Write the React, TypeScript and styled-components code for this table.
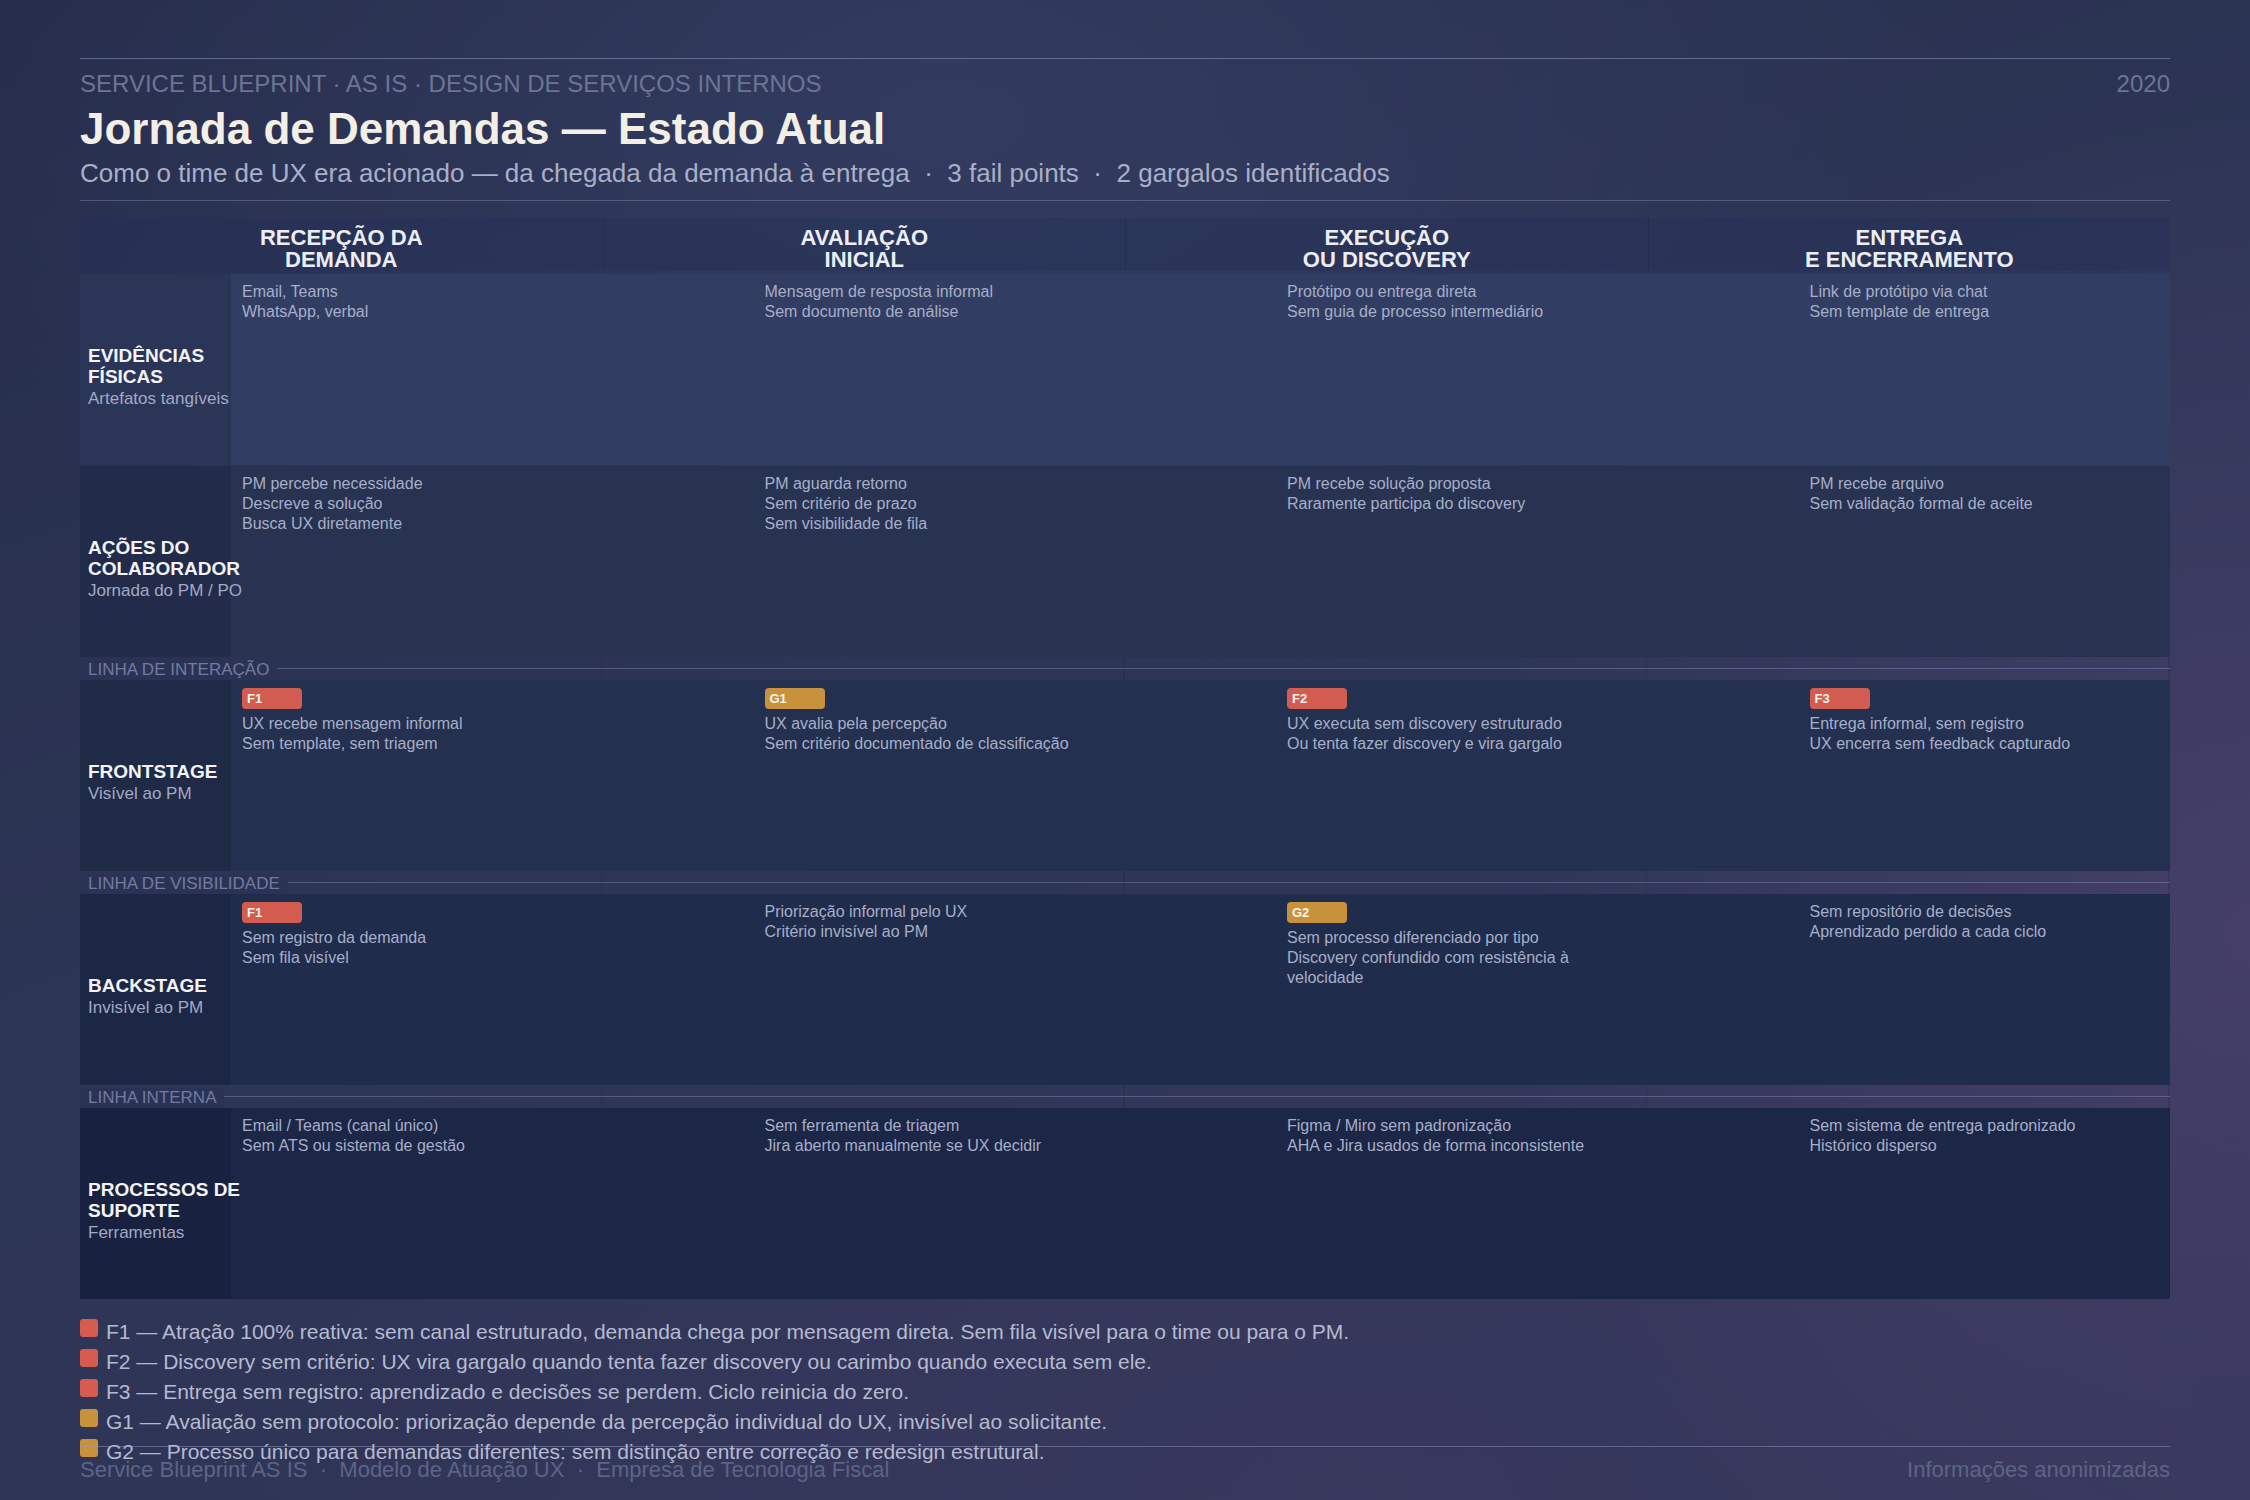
import React from "react";
import styled, { createGlobalStyle } from "styled-components";

const GlobalStyle = createGlobalStyle`
  html, body { margin: 0; padding: 0; }
  body { font-family: "Liberation Sans", Arial, sans-serif; background: #2a3152; }
  * { box-sizing: border-box; }
`;

const Page = styled.div`
  width: 100%;
  height: 100vh;
  overflow: hidden;
  display: flex;
  flex-direction: column;
  padding: 58px 80px 17px;
  font-family: "Liberation Sans", Arial, sans-serif;
  background:
    radial-gradient(ellipse 45% 40% at 42% 8%, rgba(58, 68, 108, 0.55) 0%, rgba(58, 68, 108, 0) 100%),
    radial-gradient(ellipse 35% 55% at 100% 62%, rgba(76, 66, 110, 0.75) 0%, rgba(76, 66, 110, 0) 100%),
    radial-gradient(ellipse 50% 40% at 60% 100%, rgba(62, 58, 98, 0.6) 0%, rgba(62, 58, 98, 0) 100%),
    linear-gradient(160deg, #262d4b 0%, #2d3556 45%, #323559 100%);
`;

const Main = styled.main`
  flex: 1;
  min-height: 0;
  display: flex;
  flex-direction: column;
`;

const Header = styled.header`
  border-top: 1px solid rgba(150, 160, 205, 0.5);
  border-bottom: 1px solid rgba(150, 160, 205, 0.35);
  padding: 11px 0 11px;
`;

const TopRow = styled.div`
  display: flex;
  justify-content: space-between;
  align-items: baseline;
`;

const Eyebrow = styled.div`
  font-size: 24px;
  line-height: 28px;
  color: #6d7495;
  text-transform: uppercase;
`;

const Title = styled.h1`
  margin: 5px 0 0;
  font-size: 44px;
  line-height: 52px;
  font-weight: 700;
  color: #f3efe7;
`;

const Subtitle = styled.p`
  margin: 2px 0 0;
  font-size: 26px;
  line-height: 32px;
  color: #a9afc8;
`;

const Sep = styled.span`
  margin: 0 0.28em;
`;

const Board = styled.section`
  margin-top: 17px;
  display: flex;
  flex-direction: column;
`;

const PhaseRow = styled.div`
  display: grid;
  grid-template-columns: repeat(4, 1fr);
  height: 50px;
  margin-bottom: 6px;
`;

const PhaseHead = styled.div`
  background: rgba(36, 48, 88, 0.42);
  padding-top: 9px;
  text-align: center;
  font-size: 22px;
  line-height: 22px;
  font-weight: 700;
  color: #eceef5;
  text-transform: uppercase;
  & + & {
    border-left: 1px solid rgba(20, 26, 52, 0.22);
  }
`;

const laneTones: Record<string, string> = {
  evid: "#323d63",
  acoes: "#283352",
  front: "#24304f",
  back: "#202c4c",
  suporte: "#1c2646",
};

const Lane = styled.div<{ $tone: string }>`
  display: grid;
  grid-template-columns: 151px repeat(3, 522.5px) 1fr;
  height: 191px;
  background: ${(p) => laneTones[p.$tone]};
  & + & {
    margin-top: 1px;
  }
`;

const LaneLabel = styled.div`
  background: rgba(10, 16, 40, 0.18);
  display: flex;
  flex-direction: column;
  justify-content: center;
  padding: 15px 0 0 8px;
  position: relative;
  z-index: 1;
`;

const LabelBlock = styled.div`
  width: 180px;
`;

const LabelTitle = styled.div`
  font-size: 19px;
  line-height: 21px;
  font-weight: 700;
  color: #f3f3f8;
`;

const LabelSub = styled.div`
  margin-top: 1px;
  font-size: 17px;
  line-height: 22px;
  color: #a2a9c4;
  white-space: nowrap;
`;

const Cell = styled.div`
  padding: 8px 11px;
`;

const CellText = styled.div`
  max-width: 340px;
  font-size: 16px;
  line-height: 20px;
  color: #a7aec8;
`;

const Badge = styled.div<{ $kind: "fail" | "gap" }>`
  width: 60px;
  height: 21px;
  border-radius: 4px;
  padding-left: 5px;
  margin-bottom: 5px;
  font-size: 13px;
  line-height: 21px;
  font-weight: 700;
  color: #fbf4ec;
  background: ${(p) => (p.$kind === "fail" ? "#d25c50" : "#c8913c")};
`;

const Divider = styled.div`
  height: 23px;
  display: flex;
  align-items: flex-end;
  background-image: repeating-linear-gradient(
    90deg,
    transparent 0,
    transparent 521px,
    rgba(14, 18, 44, 0.14) 521px,
    rgba(14, 18, 44, 0.14) 522.5px
  );
`;

const DividerLabel = styled.div`
  padding: 0 8px;
  height: 20px;
  font-size: 17px;
  line-height: 20px;
  color: #737b9e;
  background: #2a3355;
  text-transform: uppercase;
  white-space: nowrap;
`;

const DividerRule = styled.div`
  align-self: center;
  flex: 1;
  height: 1px;
  background: rgba(135, 145, 195, 0.42);
`;

const Legend = styled.ul`
  list-style: none;
  margin: 18px 0 0;
  padding: 0;
  display: flex;
  flex-direction: column;
`;

const LegendItem = styled.li`
  display: flex;
  align-items: flex-start;
  font-size: 21px;
  line-height: 30px;
  color: #b5bad0;
  white-space: nowrap;
`;

const Swatch = styled.span<{ $kind: "fail" | "gap" }>`
  flex: none;
  width: 18px;
  height: 18px;
  margin: 2px 8px 0 0;
  border-radius: 3px;
  background: ${(p) => (p.$kind === "fail" ? "#d65c50" : "#c8923c")};
`;

const Footer = styled.footer`
  flex: none;
  display: flex;
  justify-content: space-between;
  border-top: 1px solid rgba(150, 160, 205, 0.45);
  padding-top: 10px;
  font-size: 22px;
  line-height: 26px;
  color: #5d6486;
`;

type CellData = { badge?: string; lines: string[] };
type LaneData = { tone: string; title: string; sub: string; cells: CellData[] };

const phases = [
  ["Recepção da", "Demanda"],
  ["Avaliação", "Inicial"],
  ["Execução", "ou Discovery"],
  ["Entrega", "e Encerramento"],
];

const lanes: LaneData[] = [
  {
    tone: "evid",
    title: "EVIDÊNCIAS FÍSICAS",
    sub: "Artefatos tangíveis",
    cells: [
      { lines: ["Email, Teams", "WhatsApp, verbal"] },
      { lines: ["Mensagem de resposta informal", "Sem documento de análise"] },
      { lines: ["Protótipo ou entrega direta", "Sem guia de processo intermediário"] },
      { lines: ["Link de protótipo via chat", "Sem template de entrega"] },
    ],
  },
  {
    tone: "acoes",
    title: "AÇÕES DO COLABORADOR",
    sub: "Jornada do PM / PO",
    cells: [
      { lines: ["PM percebe necessidade", "Descreve a solução", "Busca UX diretamente"] },
      { lines: ["PM aguarda retorno", "Sem critério de prazo", "Sem visibilidade de fila"] },
      { lines: ["PM recebe solução proposta", "Raramente participa do discovery"] },
      { lines: ["PM recebe arquivo", "Sem validação formal de aceite"] },
    ],
  },
  {
    tone: "front",
    title: "FRONTSTAGE",
    sub: "Visível ao PM",
    cells: [
      { badge: "F1", lines: ["UX recebe mensagem informal", "Sem template, sem triagem"] },
      { badge: "G1", lines: ["UX avalia pela percepção", "Sem critério documentado de classificação"] },
      { badge: "F2", lines: ["UX executa sem discovery estruturado", "Ou tenta fazer discovery e vira gargalo"] },
      { badge: "F3", lines: ["Entrega informal, sem registro", "UX encerra sem feedback capturado"] },
    ],
  },
  {
    tone: "back",
    title: "BACKSTAGE",
    sub: "Invisível ao PM",
    cells: [
      { badge: "F1", lines: ["Sem registro da demanda", "Sem fila visível"] },
      { lines: ["Priorização informal pelo UX", "Critério invisível ao PM"] },
      { badge: "G2", lines: ["Sem processo diferenciado por tipo", "Discovery confundido com resistência à velocidade"] },
      { lines: ["Sem repositório de decisões", "Aprendizado perdido a cada ciclo"] },
    ],
  },
  {
    tone: "suporte",
    title: "PROCESSOS DE SUPORTE",
    sub: "Ferramentas",
    cells: [
      { lines: ["Email / Teams (canal único)", "Sem ATS ou sistema de gestão"] },
      { lines: ["Sem ferramenta de triagem", "Jira aberto manualmente se UX decidir"] },
      { lines: ["Figma / Miro sem padronização", "AHA e Jira usados de forma inconsistente"] },
      { lines: ["Sem sistema de entrega padronizado", "Histórico disperso"] },
    ],
  },
];

const dividersAfter: Record<number, string> = {
  1: "Linha de interação",
  2: "Linha de visibilidade",
  3: "Linha interna",
};

const legend: { code: string; kind: "fail" | "gap"; text: string }[] = [
  { code: "F1", kind: "fail", text: "Atração 100% reativa: sem canal estruturado, demanda chega por mensagem direta. Sem fila visível para o time ou para o PM." },
  { code: "F2", kind: "fail", text: "Discovery sem critério: UX vira gargalo quando tenta fazer discovery ou carimbo quando executa sem ele." },
  { code: "F3", kind: "fail", text: "Entrega sem registro: aprendizado e decisões se perdem. Ciclo reinicia do zero." },
  { code: "G1", kind: "gap", text: "Avaliação sem protocolo: priorização depende da percepção individual do UX, invisível ao solicitante." },
  { code: "G2", kind: "gap", text: "Processo único para demandas diferentes: sem distinção entre correção e redesign estrutural." },
];

const kindOf = (code: string): "fail" | "gap" => (code.startsWith("G") ? "gap" : "fail");

export default function App() {
  const rows: React.ReactNode[] = [];
  lanes.forEach((lane, i) => {
    rows.push(
      <Lane key={lane.title} $tone={lane.tone}>
        <LaneLabel>
          <LabelBlock>
            <LabelTitle>{lane.title}</LabelTitle>
            <LabelSub>{lane.sub}</LabelSub>
          </LabelBlock>
        </LaneLabel>
        {lane.cells.map((c, j) => (
          <Cell key={j}>
            {c.badge && <Badge $kind={kindOf(c.badge)}>{c.badge}</Badge>}
            <CellText>
              {c.lines.map((l, k) => (
                <div key={k}>{l}</div>
              ))}
            </CellText>
          </Cell>
        ))}
      </Lane>
    );
    if (dividersAfter[i]) {
      rows.push(
        <Divider key={"d" + i}>
          <DividerLabel>{dividersAfter[i]}</DividerLabel>
          <DividerRule />
        </Divider>
      );
    }
  });

  return (
    <>
      <GlobalStyle />
      <Page>
        <Main>
          <Header>
            <TopRow>
              <Eyebrow>Service Blueprint · AS IS · Design de Serviços Internos</Eyebrow>
              <Eyebrow>2020</Eyebrow>
            </TopRow>
            <Title>Jornada de Demandas — Estado Atual</Title>
            <Subtitle>
              Como o time de UX era acionado — da chegada da demanda à entrega <Sep>·</Sep> 3 fail points{" "}
              <Sep>·</Sep> 2 gargalos identificados
            </Subtitle>
          </Header>
          <Board>
            <PhaseRow>
              {phases.map(([a, b]) => (
                <PhaseHead key={a}>
                  {a}
                  <br />
                  {b}
                </PhaseHead>
              ))}
            </PhaseRow>
            {rows}
          </Board>
          <Legend>
            {legend.map((l) => (
              <LegendItem key={l.code}>
                <Swatch $kind={l.kind} />
                {l.code} — {l.text}
              </LegendItem>
            ))}
          </Legend>
        </Main>
        <Footer>
          <span>
            Service Blueprint AS IS <Sep>·</Sep> Modelo de Atuação UX <Sep>·</Sep> Empresa de Tecnologia Fiscal
          </span>
          <span>Informações anonimizadas</span>
        </Footer>
      </Page>
    </>
  );
}
